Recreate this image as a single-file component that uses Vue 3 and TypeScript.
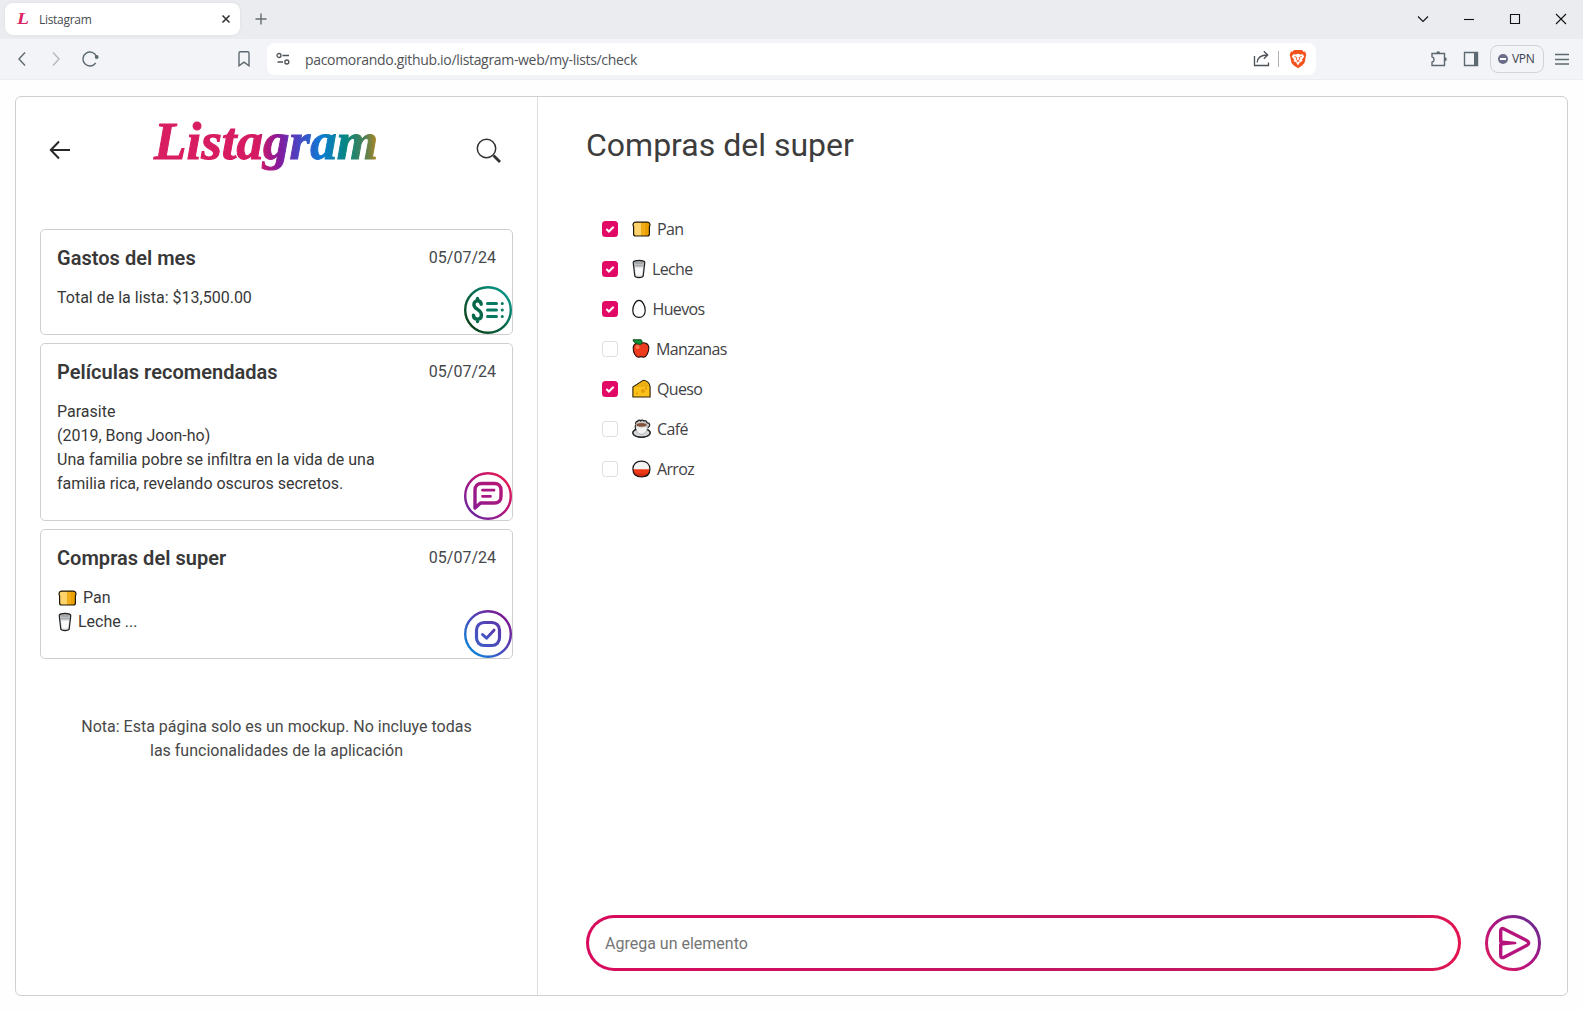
<script setup lang="ts">
import { ref } from 'vue'

interface ListCard {
  title: string
  date: string
  kind: 'money' | 'note' | 'check'
  lines: { text: string; emoji?: string }[]
}

interface Item {
  name: string
  emoji: string
  width: number
  checked: boolean
}

const cards: ListCard[] = [
  { title: 'Gastos del mes', date: '05/07/24', kind: 'money', lines: [{ text: 'Total de la lista: $13,500.00' }] },
  {
    title: 'Películas recomendadas',
    date: '05/07/24',
    kind: 'note',
    lines: [
      { text: 'Parasite' },
      { text: '(2019, Bong Joon-ho)' },
      { text: 'Una familia pobre se infiltra en la vida de una' },
      { text: 'familia rica, revelando oscuros secretos.' },
    ],
  },
  {
    title: 'Compras del super',
    date: '05/07/24',
    kind: 'check',
    lines: [
      { text: 'Pan', emoji: 'bread' },
      { text: 'Leche ...', emoji: 'milk' },
    ],
  },
]

const items = ref<Item[]>([
  { name: 'Pan', emoji: 'bread', width: 25, checked: true },
  { name: 'Leche', emoji: 'milk', width: 20, checked: true },
  { name: 'Huevos', emoji: 'egg', width: 20.5, checked: true },
  { name: 'Manzanas', emoji: 'apple', width: 24, checked: false },
  { name: 'Queso', emoji: 'cheese', width: 25, checked: true },
  { name: 'Café', emoji: 'coffee', width: 25, checked: false },
  { name: 'Arroz', emoji: 'rice', width: 25, checked: false },
])

const draft = ref('')
</script>

<template>
  <div class="window">
    <svg class="defs" width="0" height="0" aria-hidden="true">
      <defs>
        <symbol id="bread" viewBox="0 0 20 20">
          <path d="M3.600 3.200h11.800c2.400 0 3.200 2.600 2 4.400V15c0 1.400-.7 2-2 2H3.600c-1.300 0-2-.6-2-2V7.600c-1.200-1.800-.4-4.400 2-4.400z" fill="#e9a000" />
          <path d="M3.600 3.200H9V17H3.600c-1.300 0-2-.6-2-2V7.600c-1.200-1.800-.4-4.400 2-4.400z" fill="#ffd36b" />
          <path d="M9 3.200h4V17H9z" fill="#f0ad18" />
          <path d="M3.600 3.200h11.800c2.400 0 3.200 2.600 2 4.400V15c0 1.400-.7 2-2 2H3.600c-1.300 0-2-.6-2-2V7.600c-1.200-1.800-.4-4.400 2-4.400z" fill="none" stroke="#1c1604" stroke-width="1.200" />
        </symbol>
        <symbol id="milk" viewBox="0 0 20 20">
          <path d="M1.200 3.400 2.800 17.200C3.200 19 10.800 19 11.200 17.200L12.800 3.400z" fill="#c9cccf" />
          <path d="M3 8.500h8l-.8 7.600c-.8 1-5.600 1-6.400 0z" fill="#fafafa" />
          <ellipse cx="7" cy="3.300" rx="5.600" ry="1.900" fill="#a4a8ab" />
          <path d="M2.200 6c2 1 7.600 1 9.600 0" fill="none" stroke="#a0a4a7" />
          <path d="M1.200 3.400 2.800 17.200C3.200 19 10.800 19 11.200 17.200L12.800 3.400C12.800.7 1.200.7 1.200 3.400z" fill="none" stroke="#222" stroke-width="1.200" />
        </symbol>
        <symbol id="egg" viewBox="0 0 20 20">
          <path d="M7 1.400c3.400 0 6.200 5.200 6.200 10 0 4.400-2.700 7-6.200 7s-6.200-2.600-6.200-7c0-4.800 2.800-10 6.200-10z" fill="#fff" stroke="#111" stroke-width="1.200" />
        </symbol>
        <symbol id="apple" viewBox="0 0 20 20">
          <path d="M9 4.500C11.500 3 16.800 3.800 16.800 9c0 4-2.300 9.200-5 9.200-1.200 0-1.500-.6-2.500-.6s-1.700.6-2.900.6C3.600 18.200 1.200 13.500 1.200 9.200 1.200 4.500 5.600 3 9 4.500z" fill="#ef3b1d" stroke="#2a0d06" stroke-width="1.100" />
          <circle cx="5.500" cy="8" r="2" fill="#ff7a55" />
          <path d="M1 .8h8.200c1 1 1.200 2.500.5 4.300C5.500 5.700 1.800 4.200 1 .8z" fill="#0d9136" stroke="#0c4a1d" />
        </symbol>
        <symbol id="cheese" viewBox="0 0 20 20">
          <path d="M.9 8 11.500 1.200c3.500.5 6.100 3 6.600 6.600V18H.9z" fill="#fcc21b" stroke="#2c220a" stroke-width="1.100" stroke-linejoin="round" />
          <path d="m2.200 7.900 9.500-6.100c2.800.8 5 2.800 5.500 6.100z" fill="#edb012" />
          <circle cx="11" cy="12" r="1.900" fill="#e39b0b" />
          <circle cx="5" cy="14.500" r="1.100" fill="#e39b0b" /><circle cx="14" cy="9.500" r=".9" fill="#c98509" />
        </symbol>
        <symbol id="coffee" viewBox="0 0 20 20">
          <ellipse cx="9.500" cy="13.500" rx="8.800" ry="4.600" fill="#d6d9dc" stroke="#222" />
          <path d="M3.500 5.500c0 6 2.100 9.800 6 9.800s6-3.800 6-9.800z" fill="#f3f3f3" stroke="#999" stroke-width=".6" />
          <path d="M4 6.500C3 4.500 4 2 5.500 2.500 6 .8 8 .8 8.500 1.800 9.500.6 11.500 1 12 2c1.500-.8 3 .4 2.900 1.800 3.300-.3 3.800 3 1.100 5" fill="#bfc3c5" stroke="#222" stroke-width="1.200" />
          <ellipse cx="9.500" cy="5.900" rx="5.800" ry="2.300" fill="#815139" stroke="#ddd" stroke-width=".9" />
          <path d="M3.500 6c-.5 1.800-.2 3.500.3 4.800C-.2 12.300-.1 15.700 3.700 17.200c3.500 1.400 8 1.400 11.500 0 3.900-1.500 4-4.900 0-6.400" fill="none" stroke="#222" stroke-width="1.100" />
        </symbol>
        <symbol id="rice" viewBox="0 0 20 20">
          <path d="M1.800 10.500C1.600 5 5 2.300 9.300 2.300s7.900 2.700 7.700 8.200z" fill="#f3f3f3" />
          <path d="M.9 10.200h17c.2 5.300-3.400 7.800-8.500 7.800S.7 15.500.9 10.200z" fill="#f03a17" />
          <path d="M2.400 14.500h14c-1.300 2.400-3.800 3.500-7 3.500s-5.700-1.100-7-3.500z" fill="#d62b12" />
          <path d="M.9 10.200C.9 5 4.400 2.100 9.400 2.100s8.500 2.900 8.500 8.100-3.400 7.800-8.500 7.800-8.500-2.600-8.500-7.800z" fill="none" stroke="#1d1715" stroke-width="1.200" />
        </symbol>
        <linearGradient id="g-money" x1="0" y1="1" x2="1" y2="0"><stop offset=".1" stop-color="#0b4018" /><stop offset=".5" stop-color="#07694a" /><stop offset=".9" stop-color="#069688" /></linearGradient>
        <linearGradient id="g-note" x1="0" y1="1" x2="1" y2="0"><stop offset=".1" stop-color="#6a259f" /><stop offset=".5" stop-color="#ad167e" /><stop offset=".9" stop-color="#e51a50" /></linearGradient>
        <linearGradient id="g-note-inner" x1="0" y1="1" x2="1" y2="0"><stop offset="0" stop-color="#8e1c91" /><stop offset="1" stop-color="#b81672" /></linearGradient>
        <linearGradient id="g-check" x1="0" y1="1" x2="1" y2="0"><stop offset=".1" stop-color="#0b84d8" /><stop offset=".5" stop-color="#4d48bb" /><stop offset=".9" stop-color="#7c138d" /></linearGradient>
        <linearGradient id="g-check-inner" x1="0" y1="1" x2="1" y2="0"><stop offset="0" stop-color="#3f5cc8" /><stop offset="1" stop-color="#5b36ac" /></linearGradient>
        <linearGradient id="g-send" x1="0" y1="1" x2="1" y2="0"><stop offset=".1" stop-color="#d81b60" /><stop offset=".5" stop-color="#b01382" /><stop offset=".9" stop-color="#6d2a91" /></linearGradient>
        <linearGradient id="g-logo" gradientUnits="userSpaceOnUse" x1="0" y1="0" x2="226" y2="0">
          <stop offset="0" stop-color="#d91e60" /><stop offset=".47" stop-color="#d51a62" /><stop offset=".56" stop-color="#86199b" />
          <stop offset=".64" stop-color="#4f40c0" /><stop offset=".75" stop-color="#0b7bd3" /><stop offset=".86" stop-color="#06877f" />
          <stop offset=".94" stop-color="#4b8055" /><stop offset="1" stop-color="#b88620" />
        </linearGradient>
      </defs>
    </svg>

    <header class="tabs">
      <div class="tab">
        <svg class="favicon" width="16" height="20" viewBox="0 0 16 20"><text x="1" y="15" textLength="12" lengthAdjust="spacingAndGlyphs">L</text></svg>
        <span class="tab-title">Listagram</span>
        <svg width="10" height="10" viewBox="0 0 10 10" class="tab-close"><path d="m1.500 1.500 7 7m0-7-7 7" /></svg>
      </div>
      <svg class="new-tab" width="12" height="12" viewBox="0 0 12 12"><path d="M6 .5v11M.5 6h11" /></svg>
      <div class="window-controls">
        <svg width="46" height="38" viewBox="0 0 46 38"><path d="m18 16.500 5 5 5-5" /></svg>
        <svg width="46" height="38" viewBox="0 0 46 38"><path d="M18 19.500h10" /></svg>
        <svg width="46" height="38" viewBox="0 0 46 38"><path d="M18.500 14.500h9v9h-9z" /></svg>
        <svg width="46" height="38" viewBox="0 0 46 38"><path d="m18 14 10 10m0-10L18 24" /></svg>
      </div>
    </header>

    <div class="toolbar">
      <svg class="nav back" width="16" height="16" viewBox="0 0 16 16"><path d="M11 1.500 5 8l6 6.500" /></svg>
      <svg class="nav forward" width="16" height="16" viewBox="0 0 16 16"><path d="m5 1.500 6 6.500-6 6.500" /></svg>
      <svg class="nav reload" width="18" height="16" viewBox="0 0 18 16"><path d="M13.700 12A7 7 0 1 1 14.500 5.500" /><circle cx="14.700" cy="6" r="1.900" /></svg>
      <svg class="nav bookmark" width="14" height="16" viewBox="0 0 14 16"><path d="M2 2.200C2 1.300 2.500.8 3.400.8h7.200c.9 0 1.400.5 1.400 1.400v12.600l-5-3.600-5 3.600z" /></svg>
      <div class="address">
        <svg class="tune" width="14" height="14" viewBox="0 0 14 14"><circle cx="3" cy="3.500" r="2" /><circle cx="10.800" cy="10" r="2" /><path d="M6.500 3.500H13M1.500 10H7" /></svg>
        <span class="url">pacomorando.github.io/listagram-web/my-lists/check</span>
        <svg class="share" width="18" height="18" viewBox="0 0 18 18"><path d="M1.500 6v9.500h14V12.500M4.200 12.500C4.500 7.500 7.500 5 14.500 5M10.800 1.300 14.700 5l-3.900 3.800" /></svg>
        <span class="rule"></span>
        <svg class="brave" width="18" height="20" viewBox="0 0 18 20">
          <path d="M5 1h8l1.500 1.700 1.600-.2L17.300 6l-.5 1.500-1 5.500c-.4 2-3.800 4.300-6.800 6.300-3-2-6.400-4.300-6.800-6.300l-1-5.500L.7 6l1.200-3.500 1.600.2z" fill="#f4521d" />
          <path d="m4.300 5.200 2.200.3L9 4.800l2.500.7 2.200-.3 1.500 2.400-2.200 3 .4 1.500-2.500 1.500L9 16.500l-1.900-2.900-2.500-1.500.4-1.500-2.200-3z" fill="#fff" />
          <path d="m5.300 7.500 2.200.8M12.700 7.500l-2.200.8M7.800 8.200l-.5 2.300L9 11.700l1.700-1.200-.5-2.300M7.500 13 9 12l1.500 1" fill="none" stroke="#f4521d" stroke-width=".9" />
        </svg>
      </div>
      <svg class="ext" width="18" height="18" viewBox="0 0 18 18"><path d="M2 3.500h12.500v12H2v-3.300c2.700-.6 2.700-4.800 0-5.400z" /><path class="fill" d="M6.200 3.500a2 2.300 0 0 1 4 0zM14.500 7.300a2.300 2 0 0 1 0 4z" /></svg>
      <svg class="side" width="16" height="16" viewBox="0 0 16 16"><path d="M1.500 1.500h13v13h-13z" /><path class="fill" d="M11 1.500h3.500v13H11z" /></svg>
      <div class="vpn"><span class="vpn-dot"></span><span>VPN</span></div>
      <svg class="menu" width="14" height="12" viewBox="0 0 14 12"><path d="M0 1.500h14M0 6.500h14M0 11h14" /></svg>
    </div>

    <main class="app">
      <aside class="sidebar">
        <div class="brand-row">
          <svg class="back-arrow" width="22" height="20" viewBox="0 0 22 20"><path d="M21 10H2M10 1.500 1.800 10l8.200 8.500" /></svg>
          <svg class="logo" width="226" height="60" viewBox="0 0 226 60"><text x="2" y="42" textLength="224" lengthAdjust="spacingAndGlyphs">Listagram</text></svg>
          <svg class="search" width="26" height="26" viewBox="0 0 26 26"><circle cx="10.500" cy="10.500" r="9.200" /><path class="handle" d="m17.500 17.500 6.500 6.500" /></svg>
        </div>

        <div class="cards">
          <article v-for="card in cards" :key="card.title" class="card">
            <div class="card-head">
              <h2>{{ card.title }}</h2>
              <time>{{ card.date }}</time>
            </div>
            <div class="card-body">
              <p v-for="line in card.lines" :key="line.text">
                <svg v-if="line.emoji" class="emoji" :class="line.emoji" width="20" height="20"><use :href="'#' + line.emoji" width="20" height="20" /></svg><span>{{ line.text }}</span>
              </p>
            </div>
            <svg class="badge" width="48" height="48" viewBox="0 0 48 48" fill="none">
              <circle cx="24" cy="24" r="22.800" fill="#fff" :stroke="`url(#g-${card.kind})`" stroke-width="2.400" />
              <g v-if="card.kind === 'money'" stroke="#07694a" stroke-width="3.400" stroke-linecap="round">
                <path d="M17.200 18.300c-.3-2.300-1.600-3.500-3.700-3.500-2.300 0-3.600 1.500-3.600 3.700 0 5.300 7.500 4.600 7.500 10.400 0 2.600-1.500 4.200-4 4.200s-3.900-1.500-4-4M13.500 12.500v2.300M13.500 33.200v2.300" />
                <path d="M23.500 17.500h9M23.500 24h9M23.500 30.500h9M38.200 17.500h.1M38.200 24h.1M38.200 30.500h.1" stroke="#087a62" stroke-width="3" />
              </g>
              <g v-else-if="card.kind === 'note'" stroke="url(#g-note-inner)" stroke-linecap="round" stroke-linejoin="round">
                <path d="M11 36V18c0-4 2.500-6.500 6.500-6.500H30.500c4 0 6.500 2.500 6.500 6.500v6.500c0 4-2.500 6.500-6.500 6.500H16.500z" stroke-width="3.400" />
                <path d="M18.500 18.200H30M18.500 24.300h8" stroke="#a91882" stroke-width="2.800" />
              </g>
              <g v-else stroke="url(#g-check-inner)" stroke-linecap="round" stroke-linejoin="round">
                <rect x="12.500" y="12.500" width="23" height="23" rx="7.500" stroke-width="3.200" />
                <path d="m18.500 24.500 4 3.700 7.500-8" stroke-width="3" />
              </g>
            </svg>
          </article>
        </div>

        <p class="disclaimer">Nota: Esta página solo es un mockup. No incluye todas las funcionalidades de la aplicación</p>
      </aside>

      <section class="content">
        <h1>Compras del super</h1>
        <ul class="items">
          <li v-for="item in items" :key="item.name">
            <span class="box" :class="{ on: item.checked }" @click="item.checked = !item.checked">
              <svg v-if="item.checked" width="16" height="16" viewBox="0 0 16 16"><path d="m4.300 8 2.600 2.500 4.800-4.800" /></svg>
            </span>
            <svg class="item-emoji" :style="{ width: item.width + 'px' }" height="20"><use :href="'#' + item.emoji" width="20" height="20" /></svg>
            <span class="name">{{ item.name }}</span>
          </li>
        </ul>
        <form class="composer" @submit.prevent>
          <input v-model="draft" placeholder="Agrega un elemento" />
          <button type="submit" aria-label="Agregar">
            <svg width="56" height="56" viewBox="0 0 56 56" fill="none">
              <circle cx="28" cy="28" r="26.500" stroke="url(#g-send)" stroke-width="3" />
              <path d="M15.700 26.500V16c0-2.300 1.300-3 3.300-2l23 11.700c2.300 1.200 2.300 3.300 0 4.600L19 42.200c-2 1-3.300.3-3.300-2V29.500" stroke="#b5147c" stroke-width="3.400" stroke-linejoin="round" stroke-linecap="round" />
              <path d="M15 25.200c5 .6 10 1.100 15 1.500 2 .2 2 2.400 0 2.600-5 .4-10 .9-15 1.500z" fill="#b5147c" />
            </svg>
          </button>
        </form>
      </section>
    </main>
  </div>
</template>

<style>
body {
  margin: 0;
  background: #fefefe;
}
</style>

<style scoped>
* { box-sizing: border-box; }
.window {
  display: flex;
  flex-direction: column;
  width: 1583px;
  height: 1011px;
  overflow: hidden;
  color: #383838;
  font-family: Roboto, "Liberation Sans", sans-serif;
}
svg { display: block; flex: none; }
.defs { position: absolute; }
.tabs { display: flex; height: 39px; background: #ebecf0; padding: 3px 0 4px 5px; }
.tab { display: flex; align-items: center; width: 235px; height: 32px; padding: 0 9px 0 11px; border-radius: 8px; background: #fff; box-shadow: 0 0 3px #d9dbe0; }
.favicon { overflow: visible; }
.favicon text { font: italic bold 16px "Liberation Serif", serif; fill: #df2464; }
.tab-title { margin-left: 7px; flex: 1; font: 12px "Open Sans", sans-serif; letter-spacing: -.3px; color: #484b50; }
.tab-close { fill: none; stroke: #333; stroke-width: 1.6; }
.new-tab { margin: 10px 0 0 15px; fill: none; stroke: #666b70; stroke-width: 1.4; }
.window-controls { display: flex; height: 38px; margin: -3px -1px 0 auto; }
.window-controls svg { fill: none; stroke: #111; stroke-width: 1.1; }
.toolbar { display: flex; align-items: center; height: 41px; padding: 0 14px 1px; background: #f2f4f7; border-bottom: 1px solid #ebedf0; }
.toolbar > svg { fill: none; stroke: #5d6970; stroke-width: 1.4; }
.toolbar .fill { fill: #5d6970; stroke: none; }
.forward { margin-left: 18px; stroke: #b4b9be !important; }
.reload { margin-left: 18px; }
.reload circle { fill: #5d6970; stroke: none; }
.bookmark { margin-left: 137px; }
.address { display: flex; align-items: center; width: 1049px; height: 32px; margin-left: 16px; padding: 0 9px; border-radius: 8px; background: #fff; }
.tune, .share { fill: none; stroke: #4d5257; stroke-width: 1.3; }
.url { margin-left: 15px; flex: 1; padding-top: 1px; font: 14px "Open Sans", sans-serif; letter-spacing: -.32px; color: #505357; }
.rule { width: 1px; height: 16px; margin: 0 10px 0 7px; background: #aeb1b5; }
.ext { margin-left: 114px; }
.side { margin-left: 15px; }
.vpn { display: flex; align-items: center; width: 54px; height: 28px; margin-left: 11px; padding-left: 7px; gap: 4px; border: 1px solid #d0d3d9; border-radius: 8px; font: 12px "Open Sans", sans-serif; letter-spacing: -.3px; color: #3b3e4f; }
.vpn-dot { display: flex; align-items: center; justify-content: center; width: 10px; height: 10px; border-radius: 50%; background: #6b6d8b; }
.vpn-dot::after { content: ""; width: 6px; height: 2px; background: #fff; }
.menu { margin-left: 11px; }
.app { display: flex; width: 1553px; height: 900px; margin: 16px 0 0 15px; border: 1px solid #d0d0d0; border-radius: 6px; background: #fff; }
.sidebar { width: 522px; flex: none; padding: 0 24px; border-right: 1px solid #dedede; }
.brand-row { display: flex; align-items: center; height: 108px; padding: 0 11px 0 9px; }
.back-arrow { margin-top: -2px; fill: none; stroke: #282828; stroke-width: 2; }
.logo { margin-left: 81px; margin-top: -8px; overflow: visible; }
.logo text { font: italic bold 52px "Liberation Serif", serif; fill: url(#g-logo); stroke: url(#g-logo); stroke-width: 1; }
.search { margin: -1px 0 0 auto; fill: none; stroke: #333; stroke-width: 1.5; }
.search .handle { stroke-width: 2.800; }
.cards { display: flex; flex-direction: column; gap: 8px; margin-top: 24px; }
.card { position: relative; padding: 16px 16px 24px 16px; border: 1px solid #cfcfcf; border-radius: 5px; background: #fff; }
.card-head { display: flex; justify-content: space-between; height: 24px; line-height: 24px; }
.card-head h2 { margin: 0; font-size: 20px; font-weight: 600; letter-spacing: .03px; }
.card-head time { font-size: 16px; color: #45484b; }
.card-body { margin-top: 16px; }
.card-body p { display: flex; align-items: center; height: 24px; margin: 0; font-size: 16px; line-height: 24px; color: #383838; white-space: nowrap; }
.emoji { margin-right: 5px; margin-left: 1px; }
.emoji.milk { margin-right: 0; }
.badge { position: absolute; right: 0; bottom: 0; }
.disclaimer { width: 400px; margin: 56px auto 0; font-size: 16px; line-height: 24px; text-align: center; color: #484848; }
.content { display: flex; flex-direction: column; flex: 1; padding: 28px 26px 24px 48px; }
.content h1 { margin: 0; font-size: 32px; line-height: 40px; font-weight: 400; color: #3d3d3d; }
.items { margin: 44px 0 0; padding: 0 0 0 16px; list-style: none; }
.items li { display: flex; align-items: center; height: 40px; }
.box { width: 16px; height: 16px; border: 1px solid #dedede; border-radius: 3.500px; background: #fff; }
.box.on { border: 0; background: #e20865; }
.box path { fill: none; stroke: #fff; stroke-width: 2; }
.item-emoji { margin-left: 14px; }
.name { font: 16px "Open Sans", sans-serif; letter-spacing: -.65px; color: #424244; }
.composer { display: flex; align-items: center; justify-content: space-between; margin-top: auto; }
.composer input { width: 875px; height: 56px; padding: 0 16px; border: 3px solid transparent; border-radius: 28px; outline: 0; background: linear-gradient(#fff, #fff) padding-box, linear-gradient(90deg, #d80b5c, #c41561 50%, #c2185b 92%, #e51450) border-box; font: 16px Roboto, sans-serif; }
.composer input::placeholder { color: #757575; }
.composer button { padding: 0; border: 0; background: none; }
</style>
